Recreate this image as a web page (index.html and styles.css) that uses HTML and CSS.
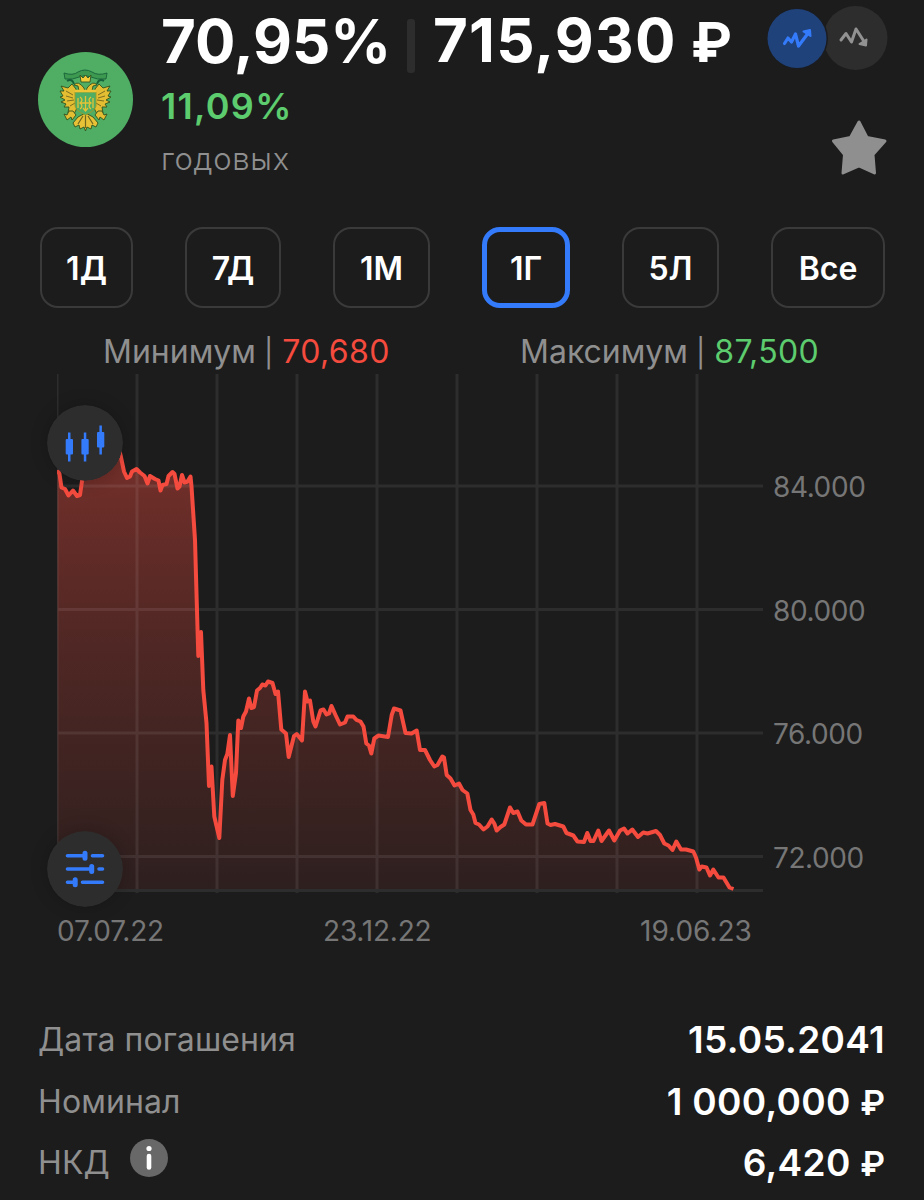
FILE: index.html
```
<!DOCTYPE html>
<html lang="ru">
<head>
    <meta charset="UTF-8">
    <meta name="viewport" content="width=device-width, initial-scale=1.0">
    <title>ОФЗ</title>
    <link rel="stylesheet" href="styles.css">
</head>
<body>
    <header class="header">
        <svg class="logo" viewBox="38 52 95 95">
            <circle cx="85.5" cy="99.5" r="47.5" fill="#4fae63"/>
            <g stroke="#31521f" stroke-width="0.9" stroke-linejoin="round">
                <path d="M64 73 Q73 76 78 72 Q85 68 92 72 Q98 76 107 73 L106 79 Q97 80 91 77 Q85 74 79 77 Q73 80 65 79Z" fill="#3d9950" stroke="#17613a"/>
                <path d="M67 81q5-3 7 3M104 81q-5-3-7 3" fill="none" stroke="#17613a" stroke-width="2"/>
                <g id="wing" fill="#e3bd32">
                    <path d="M76 89 L72 84 L68 88 L61 86 L64 91 L60 91 L63 96 L60 97 L65 100 L61 102 L66 104 L64 107 L69 107 L68 113 L74 114 L77 108Z"/>
                    <path d="M69 111 L67 115 L64 114 L67 120 L71 117 L72 120 L76 115 L73 111Z"/>
                    <path d="M84 88 Q78 80 74 85 L78 86 L79 91 L85 92Z"/>
                    <path d="M66 91l7 4M66 96l7 2M67 101l7-1M70 106l5-3" fill="none" stroke="#6f6620"/>
                </g>
                <use href="#wing" transform="matrix(-1 0 0 1 171 0)"/>
                <path d="M80 75 L83 78 L85.5 75 L88 78 L91 75 L90 82 H81Z" fill="#f3cc3a"/>
                <path d="M85.5 113 L78 117 L73 123 L75 127 L79 125 L80 129 L84 127 L85.5 131 L87 127 L91 129 L92 125 L96 127 L98 123 L93 117Z" fill="#e8c236"/>
                <path d="M85.5 115v13M83 116l-5 8M88 116l5 8" fill="none" stroke="#6f6620" stroke-width="1.2"/>
                <path d="M75 92 H96 V106 Q95 111 85.5 115 Q76 111 75 106Z" fill="#4fae63" stroke="#9c9a2b"/>
                <path d="M75 91h21" stroke="#edc536" stroke-width="2.5"/>
            </g>
            <path d="M85.5 96v15M83 108l2.5 3 2.500-3M80 97q4 3 0 6 q4 3 0 6M91 97q-4 3 0 6q-4 3 0 6M78 98v10M93 98v10M81 103h9" fill="none" stroke="#e5c339" stroke-width="1.3"/>
        </svg>
        <div class="quote">
            <div class="price">
                <span class="percent">70,95%</span>
                <span class="divider"></span>
                <span class="sum">715,930 <span class="rub">₽</span></span>
            </div>
            <div class="yield">11,09%</div>
            <div class="yield-label">годовых</div>
        </div>
        <div class="actions">
            <svg class="trend" viewBox="766 5 122 66">
                <circle cx="854.5" cy="38" r="32" fill="#2d2d2d"/>
                <circle cx="796.5" cy="38.5" r="30.5" fill="#1a1c20"/>
                <circle cx="796" cy="38.5" r="29.5" fill="#20427a"/>
                <path d="M783.5 43.5L787 38L790.5 42L794.5 34L797.5 46L808 32" fill="none" stroke="#347bfb" stroke-width="3.2" stroke-linecap="round" stroke-linejoin="round"/>
                <path d="M802.5 31.5L809 30L809.5 36Z" fill="#347bfb" stroke="#347bfb" stroke-width="2" stroke-linejoin="round"/>
                <path d="M840 40L845 33.5L850.5 42L855 29L864 43" fill="none" stroke="#929292" stroke-width="3" stroke-linecap="round" stroke-linejoin="round"/>
                <path d="M858.5 44L865 45.5L865.5 39.5Z" fill="#929292" stroke="#929292" stroke-width="2" stroke-linejoin="round"/>
            </svg>
            <svg class="star" viewBox="830 118 58 58">
                <path d="M858 122L849.5 137.5L832.5 141L843.5 154.5L842 173L858 166L873.5 173L872 154.5L884 141L866 137.5Z" fill="#8f8f8f" stroke="#8f8f8f" stroke-width="3" stroke-linejoin="round"/>
            </svg>
        </div>
    </header>

    <nav class="periods">
        <button>1Д</button>
        <button>7Д</button>
        <button>1М</button>
        <button class="active">1Г</button>
        <button>5Л</button>
        <button>Все</button>
    </nav>

    <div class="range">
        <div class="range-min">Минимум <span class="bar">|</span> <span class="red">70,680</span></div>
        <div class="range-max">Максимум <span class="bar">|</span> <span class="green">87,500</span></div>
    </div>

    <section class="chart">
        <div class="plot">
            <svg class="graph" viewBox="57 374 708 520">
                <defs>
                    <linearGradient id="fade" gradientUnits="userSpaceOnUse" x1="0" y1="440" x2="0" y2="890">
                        <stop offset="0" stop-color="#f44b3e" stop-opacity="0.42"/>
                        <stop offset="0.45" stop-color="#f44b3e" stop-opacity="0.24"/>
                        <stop offset="1" stop-color="#f44b3e" stop-opacity="0.08"/>
                    </linearGradient>
                </defs>
                <path id="area" fill="url(#fade)"/>
                <path d="M57 374V893M137 374V893M217 374V893M297 374V893M377 374V893M457 374V893M537 374V893M617 374V893M697 374V893M57 486H763M57 609.5H763M57 733H763M57 856.5H763" fill="none" stroke="#fff" stroke-opacity="0.08" stroke-width="3"/>
                <path d="M57 890.5H763" stroke="#2d2d2d" stroke-width="3"/>
                <polyline id="line" fill="none" stroke="#f44b3e" stroke-width="4" stroke-linejoin="round"/>
            </svg>
            <div class="prices">
                <span>84.000</span>
                <span>80.000</span>
                <span>76.000</span>
                <span>72.000</span>
            </div>
        </div>
        <div class="dates">
            <span>07.07.22</span>
            <span>23.12.22</span>
            <span>19.06.23</span>
        </div>
        <svg class="round-btn candles" viewBox="0 0 76 76">
            <circle cx="38" cy="38" r="38" fill="#2d2d2d"/>
            <g fill="#347bfb">
                <path d="M21 27.5h2.5v29H21zM36.8 27.5h2.5v29h-2.500zM52.4 20.5h2.5v29h-2.500z"/>
                <rect x="18.7" y="34" width="7.3" height="15.5" rx="1"/>
                <rect x="34.4" y="34" width="7.3" height="15.5" rx="1"/>
                <rect x="50" y="27" width="7.3" height="15.5" rx="1"/>
            </g>
        </svg>
        <svg class="round-btn sliders" viewBox="0 0 76 76">
            <circle cx="38" cy="38" r="38" fill="#2d2d2d"/>
            <g stroke="#347bfb" stroke-linecap="round" fill="none">
                <path d="M20.5 24.7H38M45.5 24.7H55.5M20.5 38H44M52 38H55.5M20.5 51.2H28M35.5 51.2H55.5" stroke-width="3.6"/>
                <path d="M38 22.2v5M44.7 35.5v5M28.2 48.7v5" stroke-width="5"/>
            </g>
        </svg>
    </section>

    <dl class="details">
        <div class="row">
            <dt>Дата погашения</dt>
            <dd>15.05.2041</dd>
        </div>
        <div class="row">
            <dt>Номинал</dt>
            <dd>1 000,000 <span class="rub">₽</span></dd>
        </div>
        <div class="row">
            <dt>НКД
                <svg class="info" viewBox="0 0 38 38">
                    <circle cx="19" cy="19" r="19" fill="#686868"/>
                    <circle cx="19" cy="9.5" r="2.6" fill="#fff"/>
                    <path d="M19 17v11.5" stroke="#fff" stroke-width="4.6" stroke-linecap="round"/>
                </svg>
            </dt>
            <dd>6,420 <span class="rub">₽</span></dd>
        </div>
    </dl>
    <script src="chart.js"></script>
</body>
</html>
```
FILE: styles.css
```
* {
    box-sizing: border-box;
}
body {
    margin: 0;
    width: 924px;
    height: 1200px;
    overflow: hidden;
    background-color: #1c1c1c;
    color: #fff;
    font-family: Inter, 'Liberation Sans', sans-serif;
}
.header {
    display: flex;
    height: 227px;
    padding: 0 38px;
}
.logo {
    width: 95px;
    height: 95px;
    margin-top: 52px;
}
.quote {
    flex: 1;
    padding-left: 28px;
}
.price {
    display: flex;
    align-items: center;
    height: 81px;
    padding-top: 2px;
    font-size: 60px;
    font-weight: 700;
    line-height: 81px;
    white-space: nowrap;
}
.percent {
    width: 246px;
}
.sum {
    letter-spacing: 1.2px;
    word-spacing: -1px;
}
.rub {
    font-size: 0.92em;
    letter-spacing: 0;
}
.divider {
    width: 8px;
    height: 54px;
    margin: 8px 18px 0 0;
    border-radius: 3px;
    background-color: #2d2d2d;
}
.yield {
    height: 52px;
    color: #5dcc6e;
    font-size: 36px;
    font-weight: 600;
    letter-spacing: 1.3px;
    line-height: 50px;
}
.yield-label {
    color: #8f8f8f;
    font-size: 31px;
    font-weight: 300;
    letter-spacing: 0.7px;
    line-height: 52px;
}
.actions {
    display: flex;
    flex-direction: column;
    align-items: flex-end;
    width: 122px;
    margin-right: -3px;
    padding-top: 5px;
}
.trend {
    width: 122px;
    height: 66px;
}
.star {
    width: 58px;
    height: 58px;
    margin-top: 47px;
}
.periods {
    display: flex;
    gap: 52px;
    padding-left: 40px;
}
.periods button {
    width: 97px;
    height: 81px;
    padding: 2px 0 0;
    border: 2px solid #3a3a3a;
    border-radius: 18px;
    background: none;
    color: #fff;
    font: 600 32px Inter, 'Liberation Sans', sans-serif;
}
.periods button:first-child {
    width: 93px;
}
.periods button:nth-child(2) {
    width: 96px;
}
.periods button:last-child {
    width: 114px;
}
.periods .active {
    width: 88px;
    border: 5px solid #347bfb;
}
.range {
    display: flex;
    height: 66px;
    padding-left: 103px;
    color: #8f8f8f;
    font-size: 32px;
    line-height: 87px;
    white-space: pre;
}
.range-min {
    width: 417px;
}
.bar {
    margin: 0 0 0 -1px;
    font-size: 28px;
}
.red {
    color: #f44b3e;
    letter-spacing: 0.4px;
}
.green {
    color: #5dcc6e;
    letter-spacing: 0.4px;
}
.chart {
    position: relative;
    height: 635px;
    padding-left: 57px;
    color: #767676;
    font-size: 28px;
}
.plot {
    display: flex;
    height: 520px;
}
.graph {
    width: 708px;
    height: 520px;
}
.prices {
    display: flex;
    flex-direction: column;
    padding: 51px 0 0 8px;
    letter-spacing: -0.4px;
}
.prices span {
    height: 123.5px;
    line-height: 124px;
}
.dates {
    display: grid;
    grid-template-columns: 266px 317px 111px;
    letter-spacing: -0.2px;
    line-height: 74px;
}
.dates span:last-child {
    letter-spacing: 0;
}
.round-btn {
    position: absolute;
    left: 47px;
    width: 76px;
    height: 76px;
    border-radius: 50%;
    box-shadow: 0 0 18px rgba(0, 0, 0, 0.2);
}
.candles {
    top: 31px;
}
.sliders {
    top: 457px;
}
.details {
    margin: 0;
    padding: 0 39px 0 38px;
}
.row {
    display: flex;
    justify-content: space-between;
    height: 61.5px;
    line-height: 61px;
}
.row dt {
    display: flex;
    color: #8f8f8f;
    font-size: 32px;
    letter-spacing: 0.1px;
}
.row dd {
    margin: 0;
    font-size: 37px;
    font-weight: 600;
    letter-spacing: 0.3px;
}
.info {
    width: 38px;
    height: 38px;
    margin: 7px 0 0 20px;
}
```
FILE: chart.js
```
const points = [
    [57.5,470],[59.5,474],[61.5,487.5],[65,489],[68.5,495.5],[73,490.5],[77,496],[80,495],[82,481],
    [88,466],[94,462],[100,455],[106,450],[112,446],[118,446],[120.5,455],[124,471.5],[127,478],[130,476.5],
    [132,471.5],[136.5,469],[140,472.5],[144.5,476],[147.5,483.5],[150,476],[155,479],[158.5,480.5],[160.5,490.5],
    [162.5,485],[166.5,484],[168.5,476],[172.5,472],[174.5,474],[177.5,488.5],[179.5,486.5],[182,475],[184.5,482.5],
    [187.5,481.5],[190.5,476.5],[191.5,486.5],[195,540],[196.7,600],[198.3,656],[201,632],[203.3,690],[206.5,723],
    [209,786],[211.5,766.5],[214.3,816.5],[219.3,838],[222.3,780],[225,760],[227.3,754],[230,735],[232.8,796],
    [236,773],[238.3,720.5],[241,728],[243.3,716.5],[246,711.5],[249,698.5],[251.3,708],[254,707],[257,690.5],
    [260,688],[262.3,684.5],[265.5,685.5],[268,681.5],[272.5,683],[275.5,694],[278,691.5],[281.3,729.5],[286,733.5],
    [288.7,757],[294,736],[296.7,734],[302,740.5],[305,691.5],[307.5,701.5],[310,700.5],[313.3,721.5],[315.5,726.5],
    [320.5,710.5],[323.5,709.5],[326.5,714.5],[329,713.5],[331.5,706],[335.5,715],[340,724.5],[345,722.5],[347.5,716.5],
    [353.3,716.5],[356.5,720],[360.5,721.5],[363.5,726.5],[366.3,743.5],[369,745.5],[371.3,753.5],[374.3,738.5],
    [378.5,735.5],[388,737],[391.7,715],[394,708.5],[400.5,710.5],[405.5,733],[411.5,733.5],[416.7,730.5],[420,750],
    [425,750],[430,760],[434.3,766.5],[437.5,765],[442.3,756.5],[444,757.5],[446.7,775],[450.5,778.5],[454.5,785.5],
    [459,783.5],[462.5,790],[467.3,793.5],[470.5,810],[473.3,814.5],[475.5,823],[479,824.5],[483.5,829.5],[487.5,826.5],
    [491.7,819.5],[494.3,823.5],[496.7,830.5],[500.5,827],[504.3,824.5],[510,807.5],[513.3,813],[517.5,811.5],
    [521.3,820.5],[526,824.5],[532.5,824.5],[539.3,804],[544.3,803],[547.5,823.5],[550.5,825],[555,824],[563.3,826.5],
    [566.5,833],[573.3,835.5],[577.5,841.5],[584,842],[587.3,833],[590.5,841],[593.5,841],[598.3,830.5],[601.5,841],
    [609,830.5],[614.3,840.5],[620,830.5],[624,828.5],[627.5,833.5],[632.3,829.5],[638,837],[643.3,832.5],[647.5,833.5],
    [656,831],[660,835],[664.3,843.5],[668.5,845.5],[672.5,850],[676.3,841.5],[681,849.5],[686,849.5],[693.3,851.5],
    [696,857.5],[699.3,869.5],[701.7,866.5],[706.5,867.5],[710,875.5],[713.3,869.5],[718.5,877.5],[723.5,877.5],
    [729.5,887.5],[733.5,889]
];

const line = points.map(p => p.join(",")).join(" ");
document.getElementById("line").setAttribute("points", line);
document.getElementById("area").setAttribute("d", "M57.5,890 L" + line + " L733.5,890Z");
```
